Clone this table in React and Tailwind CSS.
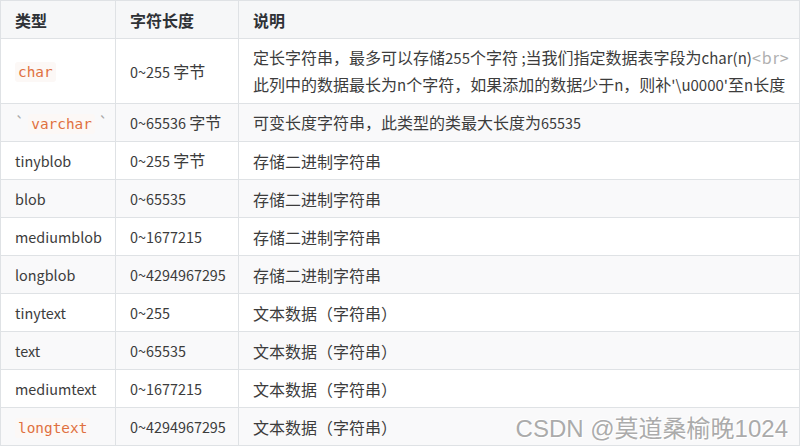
const rows = [
  { type: "char", code: true, len: "0~255 字节" },
  { type: "varchar", code: true, tick: true, len: "0~65536 字节", desc: "可变长度字符串，此类型的类最大长度为65535" },
  { type: "tinyblob", len: "0~255 字节", desc: "存储二进制字符串" },
  { type: "blob", len: "0~65535", desc: "存储二进制字符串" },
  { type: "mediumblob", len: "0~1677215", desc: "存储二进制字符串" },
  { type: "longblob", len: "0~4294967295", desc: "存储二进制字符串" },
  { type: "tinytext", len: "0~255", desc: "文本数据（字符串）" },
  { type: "text", len: "0~65535", desc: "文本数据（字符串）" },
  { type: "mediumtext", len: "0~1677215", desc: "文本数据（字符串）" },
  { type: "longtext", code: true, len: "0~4294967295", desc: "文本数据（字符串）" },
];

// latin runs are set a bit smaller so they match the narrower latin of the original
function T({ children, size = "text-[14.4px]" }) {
  const parts = children.split(/([\x20-\x7e]+)/);
  return parts.map((p, i) =>
    /^[\x20-\x7e]+$/.test(p) ? (
      <span key={i} className={size}>
        {p}
      </span>
    ) : (
      p
    )
  );
}

function Code({ children }) {
  return (
    <code className="rounded-[3px] bg-[#fcf8f6] px-[3px] py-[2px] font-['DejaVu_Sans_Mono',monospace] text-[14.4px] text-[#e0703f]">
      {children}
    </code>
  );
}

function TypeCell({ row }) {
  if (!row.code) return <T>{row.type}</T>;
  if (row.tick)
    return (
      <>
        <span className="text-[#aaa]">`</span> <Code>{row.type}</Code> <span className="text-[#aaa]">`</span>
      </>
    );
  return <Code>{row.type}</Code>;
}

export default function App() {
  return (
    <div className="relative h-[447px] w-[803px] overflow-hidden bg-white font-['Noto_Sans_CJK_SC',sans-serif] text-[16px] text-[#3c3c3c]">
      <table className="w-[800px] table-fixed border-collapse">
        <colgroup>
          <col className="w-[115px]" />
          <col className="w-[123px]" />
          <col />
        </colgroup>
        <thead>
          <tr className="bg-[#f6f7f8]">
            {["类型", "字符长度", "说明"].map((h) => (
              <th key={h} className="h-[38px] border border-[#dfe2e5] px-[14px] text-left font-bold leading-[24px] text-[#2f3236]">
                {h}
              </th>
            ))}
          </tr>
        </thead>
        <tbody>
          {rows.map((r, i) => (
            <tr key={r.type} className={i % 2 === 1 ? "bg-[#f9f9fa]" : "bg-white"}>
              <td className={`${i === 0 ? "h-[65px]" : "h-[38px]"} border border-[#dfe2e5] px-[14px] leading-[26px] whitespace-nowrap`}>
                <TypeCell row={r} />
              </td>
              <td className="border border-[#dfe2e5] px-[14px] leading-[26px] whitespace-nowrap">
                <T>{r.len}</T>
              </td>
              <td className="border border-[#dfe2e5] px-[14px] leading-[26px] whitespace-nowrap">
                {i === 0 ? (
                  <>
                    <T size="text-[15px]">定长字符串，最多可以存储255个字符 ;当我们指定数据表字段为char(n)</T>
                    <span className="text-[16px] tracking-[1px] text-[#b0b0b0]">&lt;br&gt;</span>
                    <br />
                    <T size="text-[15px]">{"此列中的数据最长为n个字符，如果添加的数据少于n，则补'\\u0000'至n长度"}</T>
                  </>
                ) : (
                  <T>{r.desc}</T>
                )}
              </td>
            </tr>
          ))}
        </tbody>
      </table>
      <div className="absolute bottom-[6px] right-[15px] font-['Liberation_Sans','Noto_Sans_CJK_SC',sans-serif] text-[24px] leading-none text-[#ababab] [text-shadow:1px_1px_0_#fff,-1px_-1px_0_#fff]">
        CSDN @莫道桑榆晚1024
      </div>
    </div>
  );
}
